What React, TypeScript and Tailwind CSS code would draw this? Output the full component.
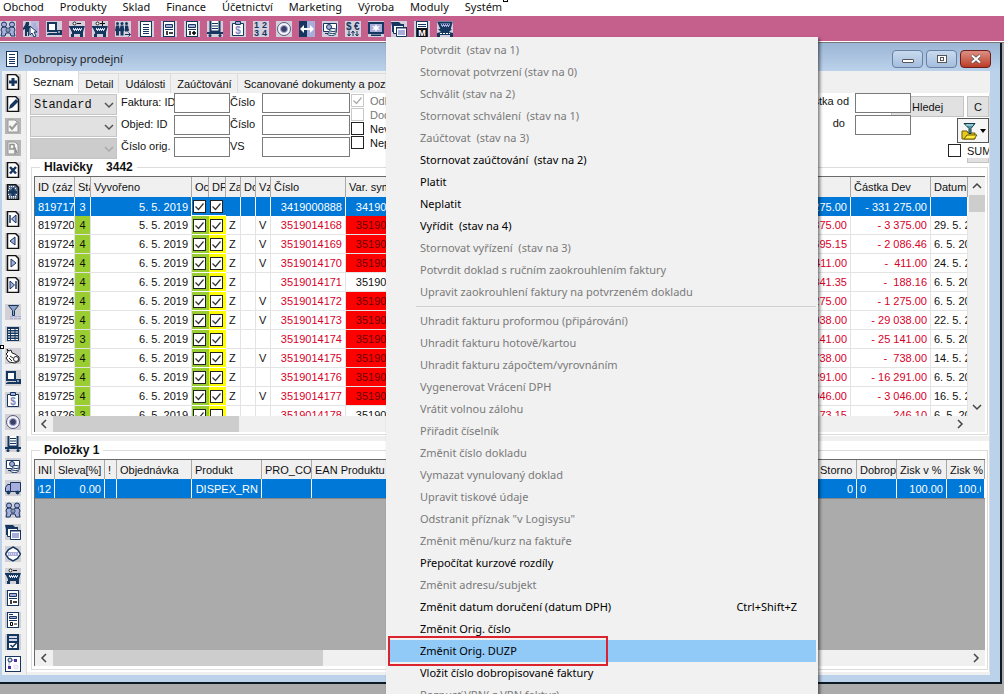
import type { ReactNode } from 'react';

const NAVY = '#14365f';
const LILAC = '#a9addb';

const iconArt: Record<string, ReactNode> = {
  people: (
    <g fill={LILAC} stroke={NAVY}>
      <circle cx="4" cy="3.500" r="2.500" />
      <circle cx="12" cy="3.500" r="2.500" />
      <path d="M1 9q0-3 3-3t4 2q1-2 4-2t3 3l-1 2 1 4h-4l-1-3H6l-1 3H1l1-4z" />
      <circle cx="8" cy="9" r="2" fill="#fff" />
      <path d="M7 9h2" />
    </g>
  ),
  pick: (
    <g>
      <rect x="8" width="8" height="16" fill={LILAC} opacity=".5" />
      <path d="M3 1h3v3H5l3 2v2l-2-1v8H5v-4H4v4H2V8L0 9V7l2-3z" fill={NAVY} />
      <path d="M10 2h3v3l2 2v5h-3V6h-2z" fill={LILAC} />
      <path d="M7 5v9l2-2 2 4 2-1-2-4h3z" fill="#fff" stroke={NAVY} />
    </g>
  ),
  pc: (
    <g>
      <path d="M2 2h8v8H2z" fill="#fff" stroke={NAVY} strokeWidth="2" />
      <path d="M3 12h8v2H1v-1zM11 9h5v5h-5z" fill={NAVY} />
      <path d="M12 11h2" stroke="#fff" />
    </g>
  ),
  cartMinus: (
    <g>
      <path d="M1.500 6h13l-1.500 5H4z" fill="#dfe4f4" stroke={NAVY} strokeWidth="2" />
      <path d="M3 7.500h11M4 9.500h9" stroke={NAVY} strokeDasharray="1 1" />
      <path d="M3 11h11v2H3zM0 5h3v1.500H0z" fill={NAVY} />
      <path d="M2 13h3v3H2zM11 13h3v3h-3z" fill={NAVY} />
      <circle cx="5.500" cy="2.500" r="1.500" fill="#fff" stroke="#222" />
      <path d="M8 2.500h4" stroke="#111" />
    </g>
  ),
  cartPlus: (
    <g>
      <path d="M1.500 6h13l-1.500 5H4z" fill="#dfe4f4" stroke={NAVY} strokeWidth="2" />
      <path d="M3 7.500h11M4 9.500h9" stroke={NAVY} strokeDasharray="1 1" />
      <path d="M3 11h11v2H3zM0 5h3v1.500H0z" fill={NAVY} />
      <path d="M2 13h3v3H2zM11 13h3v3h-3z" fill={NAVY} />
      <circle cx="5.500" cy="2.500" r="1.500" fill="#fff" stroke="#222" />
      <path d="M8 2.500h5M10.500 0v5" stroke="#111" />
    </g>
  ),
  crowd: (
    <g fill={NAVY}>
      <circle cx="2.500" cy="2.500" r="1.500" />
      <circle cx="7" cy="2.500" r="1.500" />
      <circle cx="11.500" cy="2.500" r="1.500" />
      <path d="M1 4.500h3l1 5-1 1v4H1v-4l-1-1zM5.500 4.500h3l1 5-1 1v4h-3v-4l-1-1zM10 4.500h3l1 5-1 1h-3z" />
      <path d="M10 13.500h5.500m-2-2 2 2-2 2" stroke={NAVY} fill="none" />
    </g>
  ),
  doc: (
    <g>
      <rect x="2.500" y=".5" width="11" height="15" fill="#fff" stroke={NAVY} />
      <path d="M5 3.500h6M5 6.500h6M5 8.500h6M5 10.500h6M5 12.500h6" stroke={NAVY} />
    </g>
  ),
  docMinus: (
    <g>
      <rect x="2.500" y=".5" width="11" height="15" fill="#fff" stroke={NAVY} />
      <path d="M4.500 3.500h7v3h-7z" fill={LILAC} stroke={NAVY} />
      <path d="M4 8.500h8" stroke={NAVY} />
      <path d="M6 10v4M8 12h4" stroke="#000" strokeWidth="1.500" />
    </g>
  ),
  docPlus: (
    <g>
      <rect x="2.500" y=".5" width="11" height="15" fill="#fff" stroke={NAVY} />
      <path d="M4.500 3.500h7v3h-7z" fill={LILAC} stroke={NAVY} />
      <path d="M4 8.500h8" stroke={NAVY} />
      <path d="M6 10v4M8 12h4M10 10v4" stroke="#000" strokeWidth="1.500" />
    </g>
  ),
  docZero: (
    <g>
      <rect x="2.500" y=".5" width="11" height="15" fill="#fff" stroke={NAVY} />
      <path d="M4.500 4.500h7v2h-7z" fill={LILAC} stroke={NAVY} />
      <path d="M4 8.500h8M4 2.500h4" stroke={NAVY} />
      <path d="M5.500 10.500h2v3h-2zM9 12h3" stroke="#000" fill="none" />
    </g>
  ),
  docCheck: (
    <g>
      <rect x="2.500" y=".5" width="11" height="15" fill={NAVY} stroke={NAVY} />
      <path d="M4 2h8v5H4z" fill="#cfd6ea" />
      <path d="M4 4.500h8" stroke={NAVY} />
      <path d="M4 9h8v5H4z" fill="#fff" />
      <path d="m5.500 11 2 2 4-4" stroke={NAVY} fill="none" strokeWidth="1.500" />
    </g>
  ),
  print: (
    <g>
      <path d="M3.500 0v10.500h9V0" fill="#fff" stroke={NAVY} strokeWidth="2" />
      <path d="M5 2.500h6M5 5h6M5 7.500h6" stroke={NAVY} />
      <path d="M0 11h16v2H0z" fill={NAVY} />
      <circle cx="3" cy="14.500" r="1.500" fill={NAVY} />
      <circle cx="13" cy="14.500" r="1.500" fill={NAVY} />
    </g>
  ),
  clip: (
    <g>
      <path d="M2.500 2.500h11v12h-11z" fill="#fff" stroke={NAVY} />
      <path d="M5.500.5h5v3h-5z" fill={LILAC} stroke={NAVY} />
      <text x="8" y="13" fontSize="10" fontWeight="700" textAnchor="middle" fill="#8387c0">$</text>
    </g>
  ),
  nums: (
    <g fill={NAVY} fontSize="9" fontWeight="700">
      <text x="1" y="7">1</text>
      <text x="9" y="7">2</text>
      <text x="1" y="15">3</text>
      <text x="9" y="15">4</text>
    </g>
  ),
  gear: (
    <g>
      <circle cx="8" cy="8" r="6.500" fill="#f4f4fa" stroke="#55587c" />
      <circle cx="8" cy="8" r="3.500" fill="#3c3f66" stroke={LILAC} />
    </g>
  ),
  arrows: (
    <g>
      <rect width="8" height="16" fill={NAVY} />
      <rect x="8" width="8" height="16" fill={LILAC} />
      <path d="m1 8 4-4v3h6V4l4 4-4 4V9H5v3z" fill="#fff" />
    </g>
  ),
  coins: (
    <g fill="#fff" stroke={NAVY}>
      <path d="M1.500 2.500h13v8h-13z" />
      <circle cx="7" cy="6" r="2.500" fill={LILAC} />
      <ellipse cx="9.500" cy="13" rx="4" ry="1.500" />
      <ellipse cx="10.500" cy="11" rx="4" ry="1.500" />
      <ellipse cx="11" cy="9" rx="3.500" ry="1.500" />
      <path d="M3 12.500h3" />
    </g>
  ),
  currency: (
    <g fill={NAVY}>
      <text x="1" y="9" fontSize="10" fontWeight="700">$</text>
      <text x="9" y="9" fontSize="10" fontWeight="700">€</text>
      <path d="M4 10v5m-1.500-2 1.500 2 1.500-2M8 15v-5m-1.500 2L8 10l1.500 2M12 10v5m-1.500-2 1.500 2 1.500-2" fill="none" stroke={NAVY} />
    </g>
  ),
  screen: (
    <g>
      <path d="M1 2h14v10H1z" fill={LILAC} stroke={NAVY} strokeWidth="2" />
      <path d="m8 3 1 2.500 3-.5-2 2 2 2-3-.5L8 11 7 8.500 4 9l2-2-2-2 3 .5z" fill="#fff" />
      <path d="M3 13.500h10v1.500H3z" fill={NAVY} />
    </g>
  ),
  windows: (
    <g>
      <path d="M0 1h8l2 2v2H3v6H1V5z" fill={NAVY} />
      <path d="M2.500 3.500h10v9h-10z" fill="#fff" stroke={NAVY} />
      <path d="M5.500 6.500h10v9h-10z" fill="#fff" stroke={NAVY} />
      <path d="M2 3h11v2H2zM5 6h11v1.500H5z" fill={NAVY} />
      <path d="M7 9h7v5H7z" fill={LILAC} />
    </g>
  ),
  docM: (
    <g>
      <rect x="2.500" y=".5" width="11" height="15" fill="#fff" stroke={NAVY} />
      <path d="M4 3.500h8M4 5.500h8" stroke={NAVY} />
      <path d="M3 7h10v9H3z" fill="#111" />
      <text x="8" y="14.500" fontSize="9" fontWeight="700" textAnchor="middle" fill="#fff">M</text>
    </g>
  ),
  caravan: (
    <g>
      <path d="M1.500 1.500h13L13 7H4z" fill={LILAC} stroke={NAVY} strokeWidth="2" />
      <path d="M3 3.500h11M4 5.500h9" stroke={NAVY} strokeDasharray="1 1" />
      <path d="M1 8h14l-3 3 4 1v4h-3v-2H3v2H0v-4l4-1z" fill={NAVY} />
      <path d="M3 12.500h10" stroke="#fff" strokeDasharray="2 1" />
    </g>
  ),
  add: (
    <g>
      <path d="M2.500.5h8l3 3v12h-11z" fill="#fff" stroke="#111" strokeWidth="1.500" />
      <path d="M6.500 4h3v2.500H12v3H9.500V12h-3V9.500H4v-3h2.500z" fill={NAVY} />
    </g>
  ),
  edit: (
    <g>
      <path d="M2.500.5h8l3 3v12h-11z" fill="#fff" stroke="#111" strokeWidth="1.500" />
      <path d="m4 13 1-4 6-6 2.500 2.500-6 6z" fill={NAVY} />
    </g>
  ),
  check: (
    <g>
      <rect width="16" height="16" fill="#b4b4b4" />
      <path d="M3 2h7l3 3v9H3z" fill="#f6f6f6" stroke="#999" />
      <path d="m4.500 8 2.500 3 5-6" fill="none" stroke="#999" strokeWidth="2" />
    </g>
  ),
  stamp: (
    <g>
      <rect width="16" height="16" fill="#b4b4b4" />
      <path d="M3 2h7l3 3v9H3z" fill="#f6f6f6" stroke="#999" />
      <path d="M5 10V4.500h4V9H6M9.500 7l2.500 6m-2-3v4" fill="none" stroke="#909090" strokeWidth="1.500" />
    </g>
  ),
  remove: (
    <g>
      <path d="M2.500.5h8l3 3v12h-11z" fill="#fff" stroke="#111" strokeWidth="1.500" />
      <path d="m5 5 6 6.500m0-6.500-6 6.500" stroke={NAVY} strokeWidth="2.500" />
    </g>
  ),
  clone: (
    <g>
      <path d="M2.500.5h8l3 3v12h-11z" fill="#5f7394" stroke="#111" strokeWidth="1.500" />
      <path d="M4 2.500h6M4 4.500h8M4 12.500h8M4 14h8M3 6.500h2M3 10.500h2M11 6.500h2M11 10.500h2" stroke="#fff" strokeDasharray="1 1" />
      <path d="M6.500 4h3v2.500H12v3H9.500V12h-3V9.500H4v-3h2.500z" fill={NAVY} />
    </g>
  ),
  first: (
    <g>
      <path d="M2.500.5h8l3 3v12h-11z" fill="#fff" stroke="#111" strokeWidth="1.500" />
      <path d="M5 4v8" stroke={NAVY} strokeWidth="1.500" />
      <path d="M11 4v8L6.500 8z" fill={LILAC} stroke={NAVY} />
    </g>
  ),
  prev: (
    <g>
      <path d="M2.500.5h8l3 3v12h-11z" fill="#fff" stroke="#111" strokeWidth="1.500" />
      <path d="M10 4v8L5 8z" fill={LILAC} stroke={NAVY} />
    </g>
  ),
  next: (
    <g>
      <path d="M2.500.5h8l3 3v12h-11z" fill="#fff" stroke="#111" strokeWidth="1.500" />
      <path d="M6 4v8l5-4z" fill={LILAC} stroke={NAVY} />
    </g>
  ),
  last: (
    <g>
      <path d="M2.500.5h8l3 3v12h-11z" fill="#fff" stroke="#111" strokeWidth="1.500" />
      <path d="M5 4v8l4.500-4z" fill={LILAC} stroke={NAVY} />
      <path d="M11 4v8" stroke={NAVY} strokeWidth="1.500" />
    </g>
  ),
  filter: (
    <g>
      <path d="M3.500 1.500h10l-4 5v5h-2v-5z" fill="#8fa5c6" stroke={NAVY} />
      <path d="M5 12.500h11M5 14.500h11" stroke={LILAC} strokeDasharray="3 1" />
    </g>
  ),
  grid: (
    <g>
      <rect x="2" y="1" width="12" height="14" fill={NAVY} />
      <path d="M3 3.500h10M3 6h10M3 8.500h10M3 11h10M3 13.500h10" stroke="#fff" />
      <path d="M5.500 1v14M10 1v14" stroke={NAVY} />
    </g>
  ),
  hand: (
    <g fill="#fff" stroke="#222">
      <path d="M2 1l2 2 2-1 1 3 3 1 4 3v4l-4 2-6-1-3-4 2-2-2-2 2-2z" />
      <circle cx="11" cy="11" r="2.500" />
      <path d="m5 8 3 2m-4 0 3 3" />
    </g>
  ),
  truck: (
    <g fill={LILAC} stroke={NAVY}>
      <path d="M5.500 2.500h10v9h-10zM.5 7.500l2-3h3v7h-5z" />
      <circle cx="3.500" cy="12.500" r="1.500" fill={NAVY} />
      <circle cx="12.500" cy="12.500" r="1.500" fill={NAVY} />
    </g>
  ),
  diamond: (
    <g>
      <path d="m8 1 4.500 2.500L15.500 8l-3 4.500L8 15l-4.500-2.500L.5 8l3-4.500z" fill="#fff" stroke={NAVY} strokeWidth="1.500" />
      <path d="M3 6h10v4H3z" fill={LILAC} />
      <path d="M4 8h8" stroke="#fff" strokeDasharray="1 1" />
    </g>
  ),
  flow: (
    <g>
      <rect x=".5" y=".5" width="15" height="15" fill="#fff" stroke={NAVY} />
      <path d="M5 4h6M4 5v7" stroke={LILAC} />
      <circle cx="5" cy="4" r="2" fill="#dde" stroke={NAVY} />
      <path d="M9 3h3v3H9zM3 10h3v3H3z" fill="#4634a8" />
      <circle cx="11" cy="11" r="2" fill="#f4f4fa" stroke="#dde" />
    </g>
  ),
};

function Icon({ name, className = '' }: { name: string; className?: string }) {
  return (
    <svg viewBox="0 0 16 16" className={`size-4 shrink-0 ${className}`} aria-hidden="true">
      {iconArt[name]}
    </svg>
  );
}

const mainMenu = ['Obchod', 'Produkty', 'Sklad', 'Finance', 'Účetnictví', 'Marketing', 'Výroba', 'Moduly', 'Systém'];

const toolbar = [
  'people', 'pick', 'pc', 'cartMinus', 'cartPlus', 'crowd', 'doc', 'docMinus', 'docPlus', 'print',
  'clip', 'nums', 'gear', 'arrows', 'coins', 'currency', 'screen', 'windows', 'docM', 'caravan',
];

const sideGroups = [
  ['add', 'edit', 'check', 'stamp', 'remove', 'clone'],
  ['first', 'prev', 'next', 'last'],
  [
    'filter', 'grid', 'hand', 'pc', 'clip', 'gear', 'print', 'coins', 'truck', 'people', 'windows',
    'diamond', 'cartMinus', 'docMinus', 'docZero', 'docCheck', 'flow',
  ],
];

const tabs = ['Seznam', 'Detail', 'Události', 'Zaúčtování', 'Scanované dokumenty a poznámky'];

interface Credit {
  id: string;
  state: number;
  created: string;
  dp: boolean;
  z: boolean;
  v: boolean;
  number: string;
  flagged: boolean;
  amount: string;
  due: string;
}

const credit = (
  id: string, state: number, created: string, marks: string, number: string,
  flagged: boolean, amount: string, due: string, dp = true,
): Credit => ({
  id, state, created, dp, z: marks.includes('Z'), v: marks.includes('V'), number, flagged, amount, due,
});

const credits: Credit[] = [
  credit('819717', 3, '5. 5. 2019', '', '3419000888', false, '- 331 275.00', ''),
  credit('819720', 4, '5. 5. 2019', 'ZV', '3519014168', true, '- 3 375.00', '29. 5. 2019'),
  credit('819724', 4, '6. 5. 2019', 'ZV', '3519014169', true, '- 2 086.46', '6. 5. 2019'),
  credit('819724', 4, '6. 5. 2019', 'ZV', '3519014170', true, '-  411.00', '24. 5. 2019'),
  credit('819724', 4, '6. 5. 2019', 'Z', '3519014171', false, '-  188.16', '6. 5. 2019'),
  credit('819724', 4, '6. 5. 2019', 'ZV', '3519014172', true, '- 1 275.00', '6. 5. 2019'),
  credit('819725', 4, '6. 5. 2019', 'ZV', '3519014173', true, '- 29 038.00', '22. 5. 2019'),
  credit('819725', 3, '6. 5. 2019', '', '3519014174', true, '- 25 141.00', '6. 5. 2019'),
  credit('819725', 4, '6. 5. 2019', 'ZV', '3519014175', true, '-  738.00', '14. 5. 2019'),
  credit('819725', 4, '6. 5. 2019', 'Z', '3519014176', true, '- 16 291.00', '6. 5. 2019'),
  credit('819725', 4, '6. 5. 2019', 'ZV', '3519014177', true, '- 3 046.00', '16. 5. 2019'),
  credit('819726', 3, '6. 5. 2019', '', '3519014178', false, '-  246.10', '6. 5. 2019', false),
];

const homeAmounts = [
  '331 275.00', '3 375.00', '53 695.15', '411.00', '4 841.35', '1 275.00',
  '29 038.00', '25 141.00', '738.00', '16 291.00', '3 046.00', '6 173.15',
];

interface MenuEntry {
  label: string;
  on?: boolean;
  active?: boolean;
  keys?: string;
}

const contextMenu: MenuEntry[][] = [
  [
    { label: 'Potvrdit  (stav na 1)' },
    { label: 'Stornovat potvrzení (stav na 0)' },
    { label: 'Schválit (stav na 2)' },
    { label: 'Stornovat schválení  (stav na 1)' },
    { label: 'Zaúčtovat  (stav na 3)' },
    { label: 'Stornovat zaúčtování  (stav na 2)', on: true },
    { label: 'Platit', on: true },
    { label: 'Neplatit', on: true },
    { label: 'Vyřídit  (stav na 4)', on: true },
    { label: 'Stornovat vyřízení  (stav na 3)' },
    { label: 'Potvrdit doklad s ručním zaokrouhlením faktury' },
    { label: 'Upravit zaokrouhlení faktury na potvrzeném dokladu' },
  ],
  [
    { label: 'Uhradit fakturu proformou (připárování)' },
    { label: 'Uhradit fakturu hotově/kartou' },
    { label: 'Uhradit fakturu zápočtem/vyrovnáním' },
    { label: 'Vygenerovat Vrácení DPH' },
    { label: 'Vrátit volnou zálohu' },
    { label: 'Přiřadit číselník' },
    { label: 'Změnit číslo dokladu' },
    { label: 'Vymazat vynulovaný doklad' },
    { label: 'Upravit tiskové údaje' },
    { label: 'Odstranit příznak "v Logisysu"' },
    { label: 'Změnit měnu/kurz na faktuře' },
    { label: 'Přepočítat kurzové rozdíly', on: true },
    { label: 'Změnit adresu/subjekt' },
    { label: 'Změnit datum doručení (datum DPH)', on: true, keys: 'Ctrl+Shift+Z' },
    { label: 'Změnit Orig. číslo', on: true },
    { label: 'Změnit Orig. DUZP', on: true, active: true },
    { label: 'Vložit číslo dobropisované faktury', on: true },
    { label: 'Rozpusť VRN( z VRN faktur)' },
  ],
];

function Chevron({ path, className = '' }: { path: string; className?: string }) {
  return (
    <svg viewBox="0 0 10 10" className={`size-2.5 shrink-0 ${className}`} aria-hidden="true">
      <path d={path} fill="none" stroke="currentColor" strokeWidth="1.500" />
    </svg>
  );
}

const UP = 'm1 7 4-4 4 4';
const DOWN = 'm1 3 4 4 4-4';
const LEFT = 'M7 1 3 5l4 4';
const RIGHT = 'm3 1 4 4-4 4';

function CheckBox({ label, checked = false, muted = false }: { label: string; checked?: boolean; muted?: boolean }) {
  return (
    <span className="inline-grid size-[13px] shrink-0 align-middle">
      <input
        type="checkbox"
        defaultChecked={checked}
        disabled={muted}
        aria-label={label}
        className={`col-start-1 row-start-1 size-[13px] appearance-none border bg-white ${
          muted ? 'border-[#c8c8c8]' : 'border-[#222]'
        }`}
      />
      {checked && (
        <svg viewBox="0 0 13 13" className="pointer-events-none col-start-1 row-start-1 size-[13px]" aria-hidden="true">
          <path d="m2.500 6.500 3 3 5-6" fill="none" stroke={muted ? '#aaa' : '#333'} strokeWidth="1.200" />
        </svg>
      )}
    </span>
  );
}

function MainBars() {
  return (
    <header>
      <nav className="flex h-4 items-center gap-4 bg-white px-[3px] pb-0.5 font-['Noto_Sans','Open_Sans',sans-serif] text-[11px] leading-[14px]">
        {mainMenu.map((item) => (
          <button key={item} className="whitespace-nowrap">{item}</button>
        ))}
      </nav>
      <div className="flex h-[25px] items-center gap-[7px] bg-[#c55f8c]">
        {toolbar.map((name) => (
          <button key={name} aria-label={name} className="bg-[#d3cfdc]">
            <Icon name={name} />
          </button>
        ))}
      </div>
      <div className="h-0.5 border-t border-white bg-[#777]" />
    </header>
  );
}

function TitleBar() {
  return (
    <div className="flex h-7 items-center bg-linear-to-b from-[#9bb5d4] to-[#bcd2eb] pt-1 pr-[9px] pl-1">
      <Icon name="doc" />
      <h1 className="ml-1 font-['Noto_Sans','Open_Sans',sans-serif] text-[11px] leading-4 text-[#222]">Dobropisy prodejní</h1>
      <div className="ml-auto flex gap-[3px]">
        <button aria-label="Minimalizovat" className="flex h-[18px] w-[31px] items-center justify-center rounded-sm border border-[#6780a3] bg-linear-to-b from-[#c8daee] to-[#a5bedd]">
          <span className="mt-1 h-1 w-3 rounded-[1px] border border-[#555] bg-white" />
        </button>
        <button aria-label="Maximalizovat" className="flex h-[18px] w-[31px] items-center justify-center rounded-sm border border-[#6780a3] bg-linear-to-b from-[#c8daee] to-[#a5bedd]">
          <span className="flex h-2 w-2.5 items-center justify-center border border-[#555] bg-white">
            <span className="h-1 w-1 border border-[#555]" />
          </span>
        </button>
        <button aria-label="Zavřít" className="flex h-[18px] w-[31px] items-center justify-center rounded-sm border border-[#6b1f1c] bg-linear-to-b from-[#dc8f84] to-[#bb3a25]">
          <svg viewBox="0 0 12 10" className="h-2.5 w-3" aria-hidden="true">
            <path d="m2 1.500 8 7m0-7-8 7" stroke="#555" strokeWidth="3.500" />
            <path d="m2 1.500 8 7m0-7-8 7" stroke="#fff" strokeWidth="2" />
          </svg>
        </button>
      </div>
    </div>
  );
}

function SideBar() {
  return (
    <aside className="flex w-[25px] shrink-0 flex-col gap-[5px] border-r border-[#dcdcdc] bg-[#f0f0f0] pl-[3px]">
      {sideGroups.map((group) => (
        <div key={group[0]}>
          {group.map((name) => (
            <button key={name} aria-label={name} className="flex h-[22px] w-4 items-center">
              <Icon name={name} className="bg-[#d0d0d6]" />
            </button>
          ))}
        </div>
      ))}
    </aside>
  );
}

function Combo({ label, value, tone }: { label: string; value: string; tone: string }) {
  return (
    <div className={`grid h-[21px] w-[87px] items-center border border-[#c4c4c4] text-[#555] ${tone}`}>
      <select
        aria-label={label}
        className="col-start-1 row-start-1 h-full w-full appearance-none px-[3px] font-['Liberation_Mono',monospace] text-xs text-[#111]"
      >
        <option>{value}</option>
      </select>
      <Chevron path={DOWN} className="pointer-events-none col-start-1 row-start-1 mr-0.5 justify-self-end" />
    </div>
  );
}

const searchFields = [
  ['Faktura: ID', 'Číslo'],
  ['Objed: ID', 'Číslo'],
  ['Číslo orig.', 'VS'],
];

function Filters() {
  return (
    <form className="flex items-start pl-[3px]">
      <div className="grid gap-px pt-px">
        <Combo label="Pohled" value="Standard" tone="bg-[#e1e1e1]" />
        <Combo label="Filtr" value="" tone="bg-[#e1e1e1]" />
        <Combo label="Podfiltr" value="" tone="bg-[#cccccc] text-[#aaa]" />
      </div>
      <div className="grid gap-0.5 pl-1">
        {searchFields.map(([first, second]) => (
          <div key={first} className="flex h-5 items-center">
            <label htmlFor={first} className="w-[53px] pb-0.5 whitespace-nowrap">{first}</label>
            <input id={first} className="h-5 w-14 border border-[#7a7a7a] bg-white px-1" />
            <label htmlFor={`${first}-2`} className="w-8 pb-0.5">{second}</label>
            <input id={`${first}-2`} className="h-5 w-[88px] border border-[#7a7a7a] bg-white px-1" />
          </div>
        ))}
      </div>
      <div className="grid gap-px pt-px pl-px">
        {['Odběratel', 'Dodavatel', 'Nevyřízené', 'Neplacené'].map((label, i) => (
          <div key={label} className={`flex h-[13px] items-center gap-1.5 ${i < 2 ? 'text-[#777]' : ''}`}>
            <CheckBox label={label} checked={i === 0} muted={i < 2} />
            <span>{label}</span>
          </div>
        ))}
      </div>
      <div className="ml-auto flex items-start">
        <div className="z-10 grid grid-cols-[auto_56px] items-center gap-x-1.5 gap-y-0.5 text-right">
          <label htmlFor="amount-from" className="pb-1">Částka od</label>
          <input id="amount-from" className="h-5 w-14 border border-[#7a7a7a] bg-white px-1" />
          <label htmlFor="amount-to" className="pr-1 pb-1">do</label>
          <input id="amount-to" className="h-5 w-14 border border-[#7a7a7a] bg-white px-1" />
        </div>
        <div className="-mb-1.5 -ml-5 flex flex-col items-end gap-px pt-[3px]">
          <div className="flex gap-[3px]">
            <button type="button" className="h-[21px] w-[73px] border border-[#c4c4c4] bg-[#e1e1e1] pl-5 text-left">Hledej</button>
            <button type="button" className="h-[21px] w-[22px] border border-[#c4c4c4] bg-[#e1e1e1]">C</button>
          </div>
          <button type="button" aria-label="Filtry" className="flex h-[25px] w-8 items-center justify-center gap-0.5 border border-[#555] bg-[#f6f6f6]">
            <svg viewBox="0 0 18 18" className="size-[18px]" aria-hidden="true">
              <path d="M2 9h5l1 2h7v6H2z" fill="#e8c91c" stroke="#6b5a00" />
              <path d="m4 17 3-4h10l-3 4z" fill="#ffec3d" stroke="#6b5a00" />
              <path d="M4 1.500h11l-4 5v5H9v-5z" fill="#4f9aa5" stroke="#123a4a" />
              <path d="M6 3h7" stroke="#cfeef2" />
            </svg>
            <svg viewBox="0 0 6 4" className="h-1 w-1.5" aria-hidden="true"><path d="M0 0h6L3 4z" /></svg>
          </button>
          <div className="flex h-[13px] items-center gap-1.5">
            <CheckBox label="SUM" />
            <span className="w-[22px] overflow-hidden">SUM</span>
          </div>
          <div className="h-[5px] w-[22px] border border-t-0 border-[#c4c4c4] bg-[#e1e1e1]" />
        </div>
      </div>
    </form>
  );
}

function HScroll({ thumb, inset = false }: { thumb: string; inset?: boolean }) {
  return (
    <div className={`flex h-4 shrink-0 items-center bg-[#f0f0f0] pl-1 text-[#444] ${inset ? 'pr-5' : 'pr-1'}`}>
      <Chevron path={LEFT} />
      <div className={`ml-1 h-full bg-[#cdcdcd] ${thumb}`} />
      <Chevron path={RIGHT} className="ml-auto" />
    </div>
  );
}

const headCell = 'overflow-hidden border-r border-[#a8a8a8] bg-[#f0f0f0] pl-[3px] text-left font-normal whitespace-nowrap';
const cell = 'overflow-hidden border-r border-b border-[#e3e3e3] px-[3px] whitespace-pre';
const selCell = 'overflow-hidden border-r border-white px-[3px] whitespace-pre';

function CreditTable() {
  const heads = ['ID (záz', 'Sta', 'Vyvořeno', 'Oc', 'DP', 'Za', 'Do', 'Vz', 'Číslo', 'Var. symbol', '', '', 'Částka Dev', 'Datum'];
  return (
    <div className="border-t border-l border-[#6a6a6a] bg-white">
      <div className="flex h-[239px]">
        <div className="min-w-0 flex-1 overflow-hidden">
          <table className="w-full table-fixed border-separate border-spacing-0">
            <colgroup>
              <col className="w-10" />
              <col className="w-4" />
              <col className="w-[101px]" />
              <col className="w-[17px]" />
              <col className="w-[17px]" />
              <col className="w-[15px]" />
              <col className="w-[15px]" />
              <col className="w-[15px]" />
              <col className="w-[75px]" />
              <col className="w-[75px]" />
              <col />
              <col className="w-[75px]" />
              <col className="w-20" />
              <col className="w-[37px]" />
            </colgroup>
            <thead>
              <tr className="h-5">
                {heads.map((head, i) => (
                  <th key={i} className={headCell}>{head}</th>
                ))}
              </tr>
            </thead>
            <tbody>
              {credits.map((row, i) => {
                const sel = i === 0;
                const base = sel ? selCell : cell;
                const red = sel ? '' : 'text-[#d8002a]';
                return (
                  <tr key={row.number} className={`h-[19px] ${sel ? 'bg-[#0078d7] text-white' : 'text-[#111]'}`}>
                    <td className={base}>{row.id}</td>
                    <td className={`${base} text-center ${sel ? '' : 'bg-[#9acd32]'}`}>{row.state}</td>
                    <td className={`${base} text-right`}>{row.created}</td>
                    <td className={`border-b border-white pl-px text-left leading-none ${sel ? '' : 'bg-[#9acd32]'}`}>
                      <CheckBox label={`Odesláno ${row.number}`} checked />
                    </td>
                    <td className={`border-b border-white pl-px text-left leading-none ${sel ? '' : 'bg-[#ffff00]'}`}>
                      <CheckBox label={`DPH ${row.number}`} checked={row.dp} />
                    </td>
                    <td className={base}>{row.z ? 'Z' : ''}</td>
                    <td className={base} />
                    <td className={base}>{row.v ? 'V' : ''}</td>
                    <td className={`${base} text-right ${red}`}>{row.number}</td>
                    <td className={`${base} text-right ${row.flagged ? 'bg-[#ff0000] text-[#6a0000]' : ''}`}>{row.number}</td>
                    <td className={base} />
                    <td className={`${base} text-right ${red}`}>{homeAmounts[i]}</td>
                    <td className={`${base} text-right ${red}`}>{row.amount}</td>
                    <td className={base}>{row.due}</td>
                  </tr>
                );
              })}
            </tbody>
          </table>
        </div>
        <div className="flex w-[17px] flex-col items-center bg-[#f0f0f0] py-1 text-[#444]">
          <Chevron path={UP} />
          <div className="mt-1 h-[17px] w-4 bg-[#cdcdcd]" />
          <Chevron path={DOWN} className="mt-auto" />
        </div>
      </div>
      <HScroll thumb="w-[186px]" inset />
    </div>
  );
}

function ItemTable() {
  const heads = ['INI', 'Sleva[%]', '!', 'Objednávka', 'Produkt', 'PRO_CODE', 'EAN Produktu', '', 'Storno', 'Dobropis', 'Zisk v %', 'Zisk %'];
  const values = ['912', '0.00', '', '', 'DISPEX_RN', '', '', '', '0', '0', '100.00', '100.00'];
  return (
    <div className="flex min-h-0 flex-1 flex-col border-t border-l border-[#6a6a6a] bg-[#ababab]">
      <table className="w-full table-fixed border-separate border-spacing-0 border-b border-[#888]">
        <colgroup>
          <col className="w-5" />
          <col className="w-[50px]" />
          <col className="w-3" />
          <col className="w-[75px]" />
          <col className="w-[70px]" />
          <col className="w-[50px]" />
          <col className="w-[90px]" />
          <col />
          <col className="w-10" />
          <col className="w-10" />
          <col className="w-[50px]" />
          <col className="w-[38px]" />
        </colgroup>
        <thead>
          <tr className="h-[19px]">
            {heads.map((head, i) => (
              <th key={i} className={headCell}>{head}</th>
            ))}
          </tr>
        </thead>
        <tbody>
          <tr className="h-[19px] bg-[#0078d7] text-white">
            {values.map((value, i) => (
              <td key={i} className={selCell}>
                <div className={`flex ${[0, 1, 4, 8, 10].includes(i) ? 'justify-end' : ''} ${i === 11 ? 'pl-2' : ''} overflow-hidden`}>
                  {value}
                </div>
              </td>
            ))}
          </tr>
        </tbody>
      </table>
      <div className="mt-auto flex flex-col">
        <HScroll thumb="w-[270px]" />
      </div>
    </div>
  );
}

function ContextMenu() {
  return (
    <div
      role="menu"
      className="absolute top-[37px] left-[386px] z-20 w-[432px] bg-[#f1f1f1] p-0.5 font-['Noto_Sans','Open_Sans',sans-serif] text-[11px] shadow-[2px_2px_3px_rgba(0,0,0,0.5)]"
    >
      {contextMenu.map((group, g) => (
        <div key={g} className={g > 0 ? 'mt-[3px] border-t border-transparent pt-[3px]' : ''}>
          {g > 0 && <hr className="-mt-1 mb-[3px] ml-7 border-[#d0d0d0]" />}
          {group.map((entry) => (
            <button
              key={entry.label}
              role="menuitem"
              disabled={!entry.on}
              className={`relative flex h-[22px] w-full items-center justify-between pr-[19px] pl-8 whitespace-pre ${
                entry.on ? 'text-black' : 'text-[#7a7a7a]'
              } ${entry.active ? 'bg-[#91c9f7]' : ''}`}
            >
              <span>{entry.label}</span>
              {entry.keys && <span>{entry.keys}</span>}
              {entry.active && <span className="absolute -top-1 left-0 h-[30px] w-[220px] border-2 border-[#d9232e]" />}
            </button>
          ))}
        </div>
      ))}
    </div>
  );
}

export default function App() {
  return (
    <div className="relative flex h-screen flex-col overflow-hidden bg-[#ababab] font-['Liberation_Sans',Arial,sans-serif] text-[11px] leading-[14px] text-[#111]">
      <MainBars />
      <div className="mr-0.5 mb-2.5 flex min-h-0 flex-1 flex-col border-r-2 border-b-2 border-[#0c1a24] bg-[#bcd2eb]">
        <TitleBar />
        <div className="mr-2.5 mb-[7px] ml-0.5 flex min-h-0 flex-1 bg-[#f0f0f0]">
          <SideBar />
          <div className="flex min-w-0 flex-1 flex-col pb-[3px]">
            <div role="tablist" className="flex h-[22px] items-end">
              {tabs.map((tab, i) => (
                <button
                  key={tab}
                  role="tab"
                  aria-selected={i === 0}
                  className={`border-r border-[#dcdcdc] pr-[5px] pl-1.5 whitespace-nowrap ${
                    i === 0 ? 'h-[22px] bg-white' : 'h-5 border-t bg-[#f0f0f0]'
                  }`}
                >
                  {tab}
                </button>
              ))}
            </div>
            <main className="flex min-h-0 flex-1 flex-col border-r border-[#dcdcdc] bg-white">
              <Filters />
              <fieldset className="mr-px ml-1 min-w-0 border border-[#dcdcdc] px-0.5 pt-px pb-0.5">
                <legend className="ml-1.5 px-1 text-xs leading-4 font-bold whitespace-pre">Hlavičky    3442</legend>
                <CreditTable />
              </fieldset>
              <div className="my-px h-[5px] shrink-0 bg-[#f0f0f0]" />
              <fieldset className="mr-px mb-0.5 ml-1 flex min-h-0 min-w-0 flex-1 flex-col border border-[#dcdcdc] px-0.5 pt-px pb-[3px]">
                <legend className="ml-1.5 px-1 text-xs leading-4 font-bold">Položky 1</legend>
                <ItemTable />
              </fieldset>
            </main>
          </div>
        </div>
      </div>
      <ContextMenu />
      <span className="absolute top-[345px] left-0 size-1 border border-black bg-white" />
      <span className="absolute top-0 left-[503px] h-0.5 w-[5px] border border-t-0 border-black bg-white" />
    </div>
  );
}
